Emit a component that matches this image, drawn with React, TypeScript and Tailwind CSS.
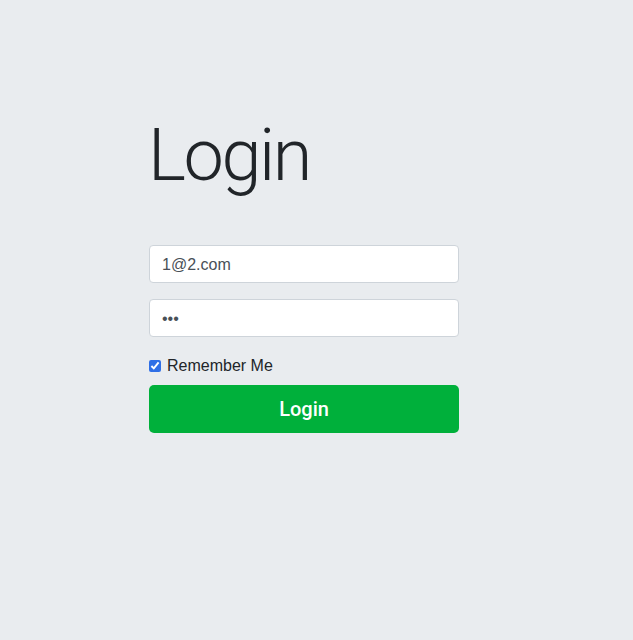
import React from "react";

export default function App() {
  return (
    <div className="min-h-[640px] w-full bg-[#e9ecef] pl-[149px] pt-[113px]" style={{ fontFamily: "'Liberation Sans', Arial, sans-serif" }}>
      <div className="w-[310px]">
        <h1 className="text-[72px] leading-[86px] font-light text-[#212529] tracking-[-2.4px] -ml-[1px]" style={{ fontFamily: "Roboto, 'Liberation Sans', sans-serif" }}>Login</h1>
        <div className="mt-[46px] flex flex-col">
          <input
            className="h-[38px] w-full rounded-[4px] border border-[#ced4da] bg-white px-[12px] pt-[1px] text-[16px] text-[#495057] outline-none"
            defaultValue="1@2.com"
          />
          <input
            type="password"
            className="mt-[16px] h-[38px] w-full rounded-[4px] border border-[#ced4da] bg-white px-[12px] pt-[1px] text-[16px] text-[#495057] outline-none"
            defaultValue="abc"
          />
          <label className="mt-[17px] flex items-center gap-[6px] text-[16px] leading-[24px] text-[#212529]">
            <input type="checkbox" defaultChecked className="h-[12px] w-[12px] accent-[#2f6fe6]" />
            Remember Me
          </label>
          <button className="mt-[7px] h-[48px] w-full rounded-[5px] bg-[#00b03b] text-[20px] font-medium text-white" style={{ fontFamily: "Roboto, 'Liberation Sans', sans-serif" }}>
            Login
          </button>
        </div>
      </div>
    </div>
  );
}
